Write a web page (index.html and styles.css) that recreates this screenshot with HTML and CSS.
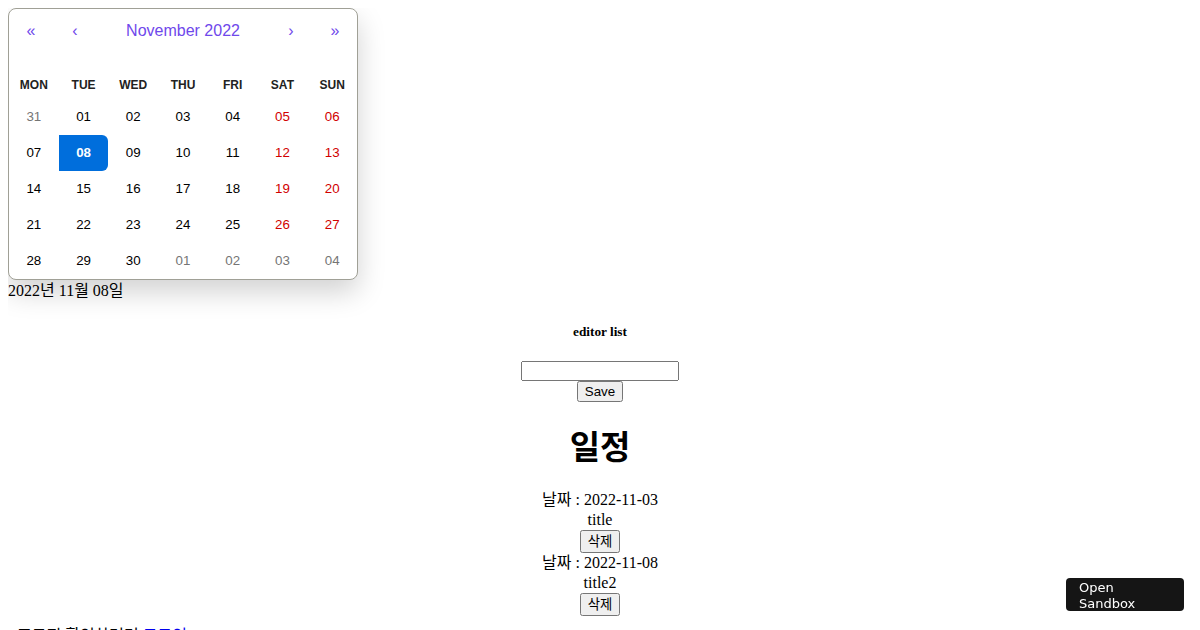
FILE: index.html
```html
<!DOCTYPE html>
<html lang="ko">
<head>
<meta charset="utf-8">
<title>Calendar</title>
<link rel="stylesheet" href="styles.css">
</head>
<body>
<div class="calendar">
  <div class="cal-nav">
    <button class="nav-btn">«</button>
    <button class="nav-btn">‹</button>
    <button class="nav-label">November 2022</button>
    <button class="nav-btn">›</button>
    <button class="nav-btn">»</button>
  </div>
  <div class="weekdays">
    <div>Mon</div><div>Tue</div><div>Wed</div><div>Thu</div><div>Fri</div><div>Sat</div><div>Sun</div>
  </div>
  <div class="days">
    <button class="tile other">31</button><button class="tile">01</button><button class="tile">02</button><button class="tile">03</button><button class="tile">04</button><button class="tile weekend">05</button><button class="tile weekend">06</button>
    <button class="tile">07</button><button class="tile active">08</button><button class="tile">09</button><button class="tile">10</button><button class="tile">11</button><button class="tile weekend">12</button><button class="tile weekend">13</button>
    <button class="tile">14</button><button class="tile">15</button><button class="tile">16</button><button class="tile">17</button><button class="tile">18</button><button class="tile weekend">19</button><button class="tile weekend">20</button>
    <button class="tile">21</button><button class="tile">22</button><button class="tile">23</button><button class="tile">24</button><button class="tile">25</button><button class="tile weekend">26</button><button class="tile weekend">27</button>
    <button class="tile">28</button><button class="tile">29</button><button class="tile">30</button><button class="tile other">01</button><button class="tile other">02</button><button class="tile other">03</button><button class="tile other">04</button>
  </div>
</div>
<div class="picked">2022년 11월 08일</div>
<div class="editor">
  <h5 class="editor-title">editor list</h5>
  <form class="editor-form">
    <input class="editor-input" type="text"><br>
    <button type="button" class="btn">Save</button>
  </form>
  <h1 class="schedule-title">일정</h1>
  <div class="item">
    <div class="line">날짜 : 2022-11-03</div>
    <div class="line">title</div>
    <button class="btn">삭제</button>
  </div>
  <div class="item">
    <div class="line">날짜 : 2022-11-08</div>
    <div class="line">title2</div>
    <button class="btn">삭제</button>
  </div>
</div>
<p class="footer-line">프로필 확인하려면 <a href="#" class="link">로그인</a></p>
<a href="#" class="sandbox">Open Sandbox</a>
</body>
</html>
```
FILE: styles.css
```css
body {
  margin: 8px;
  font-family: "Liberation Serif", "Noto Sans CJK KR", serif;
  font-size: 16px;
  color: #000;
  background: #fff;
}

.calendar {
  width: 350px;
  box-sizing: border-box;
  border: 1px solid #a0a096;
  border-radius: 8px;
  background: #fff;
  box-shadow: 0 12px 28px rgba(0, 0, 0, 0.18);
  font-family: "Liberation Sans", Arial, sans-serif;
  line-height: 18px;
  overflow: hidden;
}

.cal-nav {
  display: flex;
  height: 44px;
  margin-bottom: 16px;
}

.cal-nav button {
  background: none;
  border: 0;
  margin: 0;
  padding: 0;
  font-family: "Liberation Sans", Arial, sans-serif;
  font-size: 16px;
  color: #6f48eb;
  cursor: pointer;
}

.nav-btn {
  width: 44px;
  flex: none;
}

.nav-label {
  flex: 1;
}

.weekdays {
  display: grid;
  grid-template-columns: repeat(7, 1fr);
  text-align: center;
  text-transform: uppercase;
  font-weight: bold;
  font-size: 12px;
  color: #222;
}

.weekdays div {
  padding: 7px 6px 5px;
}

.days {
  display: grid;
  grid-template-columns: repeat(7, 1fr);
}

.tile {
  background: none;
  border: 0;
  margin: 0;
  padding: 10px 6.6667px;
  line-height: 16px;
  font-family: "Liberation Sans", Arial, sans-serif;
  font-size: 13.333px;
  color: #000;
  text-align: center;
}

.tile.weekend {
  color: #d10000;
}

.tile.other {
  color: #757575;
}

.tile.active {
  background: #006edc;
  color: #fff;
  font-weight: bold;
  border-radius: 0 6px 6px 0;
}

.picked {
  line-height: 22px;
}

.editor {
  text-align: center;
}

.editor-title {
  font-size: 13.28px;
  line-height: 15px;
  margin: 22px 0;
}

.editor-form {
  margin: 0;
  line-height: 20px;
}

.editor-input {
  width: 158px;
  height: 20px;
  box-sizing: border-box;
  font-size: 13.333px;
  vertical-align: top;
}

.btn {
  height: 21px;
  box-sizing: border-box;
  padding: 0 6px;
  font-size: 13.333px;
  line-height: 17px;
  font-family: "Liberation Sans", "Noto Sans CJK KR", sans-serif;
  vertical-align: top;
}

.item .btn {
  height: 23px;
}

.schedule-title {
  font-family: "Noto Sans CJK KR", sans-serif;
  font-size: 33px;
  line-height: 40px;
  margin: 23px 0 25px;
}

.line {
  line-height: 20px;
}

.footer-line {
  margin: 10px 0 0;
  padding-left: 9px;
  line-height: 20px;
}

.link {
  color: #0000ee;
  text-decoration: none;
}

.sandbox {
  position: fixed;
  right: 16px;
  bottom: 19px;
  width: 118px;
  height: 33px;
  box-sizing: border-box;
  padding: 2px 13px 0;
  background: #151515;
  border-radius: 4px;
  color: #fff;
  text-decoration: none;
  font-family: "DejaVu Sans", sans-serif;
  font-size: 13px;
  line-height: 16px;
}
```
